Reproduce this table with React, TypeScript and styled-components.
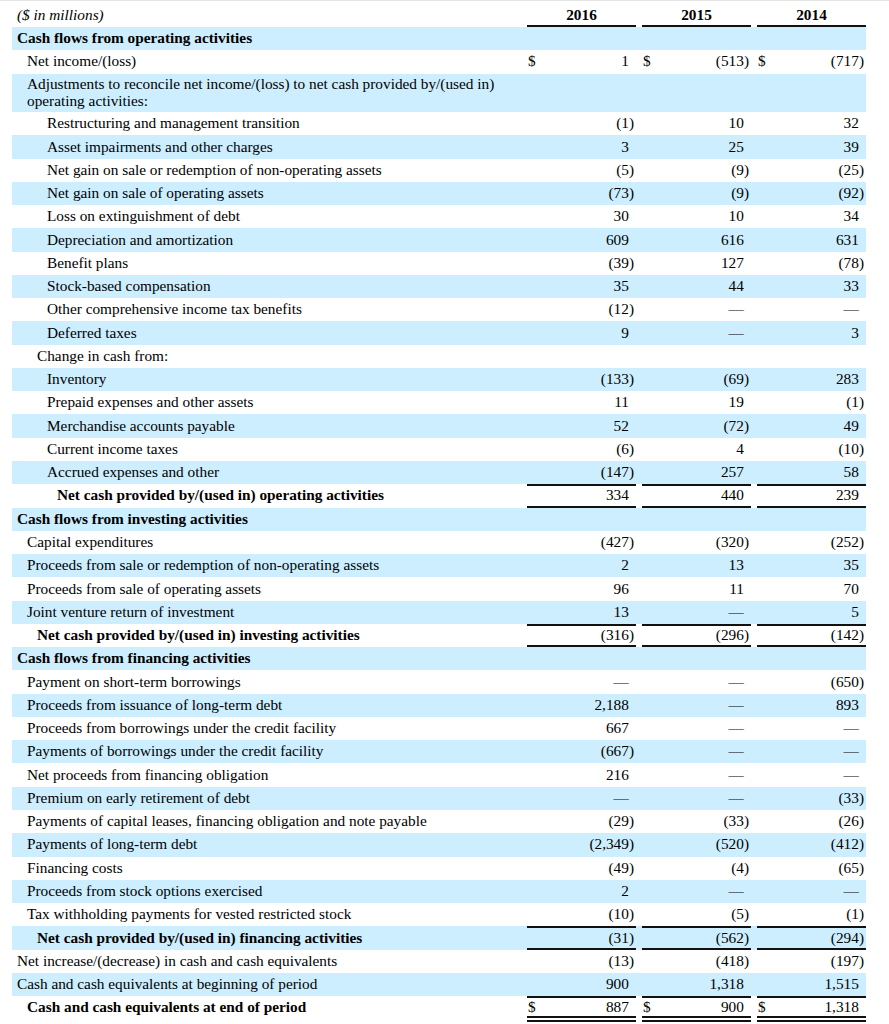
import React from 'react';
import styled, { createGlobalStyle } from 'styled-components';

const GlobalStyle = createGlobalStyle`
  html, body {
    margin: 0;
    padding: 0;
    background: #fff;
  }
  body {
    font-family: 'Liberation Serif', 'Times New Roman', serif;
    font-size: 15.3px;
    color: #000;
  }
  * {
    box-sizing: border-box;
  }
`;

const Page = styled.div`
  border-top: 1px solid #e4e4e4;
  padding-left: 12px;
`;

const Table = styled.div`
  width: 854px;
  line-height: 16.8px;
`;

const Row = styled.div<{ $shade: boolean; $h: number }>`
  display: grid;
  grid-template-columns: 509px 109px 109px 109px;
  column-gap: 6px;
  height: ${(p) => p.$h}px;
  background: ${(p) => (p.$shade ? '#cceeff' : '#fff')};
`;

const HeaderRow = styled.div`
  display: grid;
  grid-template-columns: 509px 109px 109px 109px;
  column-gap: 6px;
  height: 26px;
`;

const Units = styled.div`
  font-style: italic;
  padding: 6px 0 0 5px;
`;

const Year = styled.div`
  font-weight: bold;
  text-align: center;
  padding-top: 6px;
  border-bottom: 2px solid #111;
`;

const Label = styled.div<{ $indent: number; $bold?: boolean; $pad?: number }>`
  display: flex;
  align-items: center;
  padding-left: ${(p) => 5 + p.$indent * 10}px;
  padding-bottom: ${(p) => p.$pad || 0}px;
  font-weight: ${(p) => (p.$bold ? 'bold' : 'normal')};
  white-space: nowrap;
`;

const Cell = styled.div<{ $top?: boolean; $bottom?: 'single' | 'double' }>`
  display: flex;
  justify-content: space-between;
  align-items: center;
  padding: 0 2px 0 1px;
  border-top: ${(p) => (p.$top ? '2px solid #111' : 'none')};
  border-bottom: ${(p) =>
    p.$bottom === 'double' ? '6px double #111' : p.$bottom === 'single' ? '2px solid #111' : 'none'};
`;

const Amount = styled.span`
  margin-left: auto;
`;

const Hang = styled.span`
  visibility: hidden;
`;

type Line = {
  label: string;
  indent: number;
  bold?: boolean;
  values?: string[];
  dollar?: boolean;
  top?: boolean;
  bottom?: 'single' | 'double';
  h?: number;
  wrap?: boolean;
};

const R = 23.28;

const lines: Line[] = [
  { label: 'Cash flows from operating activities', indent: 0, bold: true, h: 23 },
  { label: 'Net income/(loss)', indent: 1, dollar: true, values: ['1', '(513)', '(717)'], h: 23.5 },
  { label: 'Adjustments to reconcile net income/(loss) to net cash provided by/(used in)\noperating activities:', indent: 1, h: 38.5, wrap: true },
  { label: 'Restructuring and management transition', indent: 3, values: ['(1)', '10', '32'] },
  { label: 'Asset impairments and other charges', indent: 3, values: ['3', '25', '39'] },
  { label: 'Net gain on sale or redemption of non-operating assets', indent: 3, values: ['(5)', '(9)', '(25)'] },
  { label: 'Net gain on sale of operating assets', indent: 3, values: ['(73)', '(9)', '(92)'] },
  { label: 'Loss on extinguishment of debt', indent: 3, values: ['30', '10', '34'] },
  { label: 'Depreciation and amortization', indent: 3, values: ['609', '616', '631'] },
  { label: 'Benefit plans', indent: 3, values: ['(39)', '127', '(78)'] },
  { label: 'Stock-based compensation', indent: 3, values: ['35', '44', '33'] },
  { label: 'Other comprehensive income tax benefits', indent: 3, values: ['(12)', '—', '—'] },
  { label: 'Deferred taxes', indent: 3, values: ['9', '—', '3'] },
  { label: 'Change in cash from:', indent: 2 },
  { label: 'Inventory', indent: 3, values: ['(133)', '(69)', '283'] },
  { label: 'Prepaid expenses and other assets', indent: 3, values: ['11', '19', '(1)'] },
  { label: 'Merchandise accounts payable', indent: 3, values: ['52', '(72)', '49'] },
  { label: 'Current income taxes', indent: 3, values: ['(6)', '4', '(10)'] },
  { label: 'Accrued expenses and other', indent: 3, values: ['(147)', '257', '58'] },
  { label: 'Net cash provided by/(used in) operating activities', indent: 4, bold: true, values: ['334', '440', '239'], top: true, bottom: 'single' },
  { label: 'Cash flows from investing activities', indent: 0, bold: true },
  { label: 'Capital expenditures', indent: 1, values: ['(427)', '(320)', '(252)'] },
  { label: 'Proceeds from sale or redemption of non-operating assets', indent: 1, values: ['2', '13', '35'] },
  { label: 'Proceeds from sale of operating assets', indent: 1, values: ['96', '11', '70'] },
  { label: 'Joint venture return of investment', indent: 1, values: ['13', '—', '5'] },
  { label: 'Net cash provided by/(used in) investing activities', indent: 2, bold: true, values: ['(316)', '(296)', '(142)'], top: true, bottom: 'single' },
  { label: 'Cash flows from financing activities', indent: 0, bold: true },
  { label: 'Payment on short-term borrowings', indent: 1, values: ['—', '—', '(650)'] },
  { label: 'Proceeds from issuance of long-term debt', indent: 1, values: ['2,188', '—', '893'] },
  { label: 'Proceeds from borrowings under the credit facility', indent: 1, values: ['667', '—', '—'] },
  { label: 'Payments of borrowings under the credit facility', indent: 1, values: ['(667)', '—', '—'] },
  { label: 'Net proceeds from financing obligation', indent: 1, values: ['216', '—', '—'] },
  { label: 'Premium on early retirement of debt', indent: 1, values: ['—', '—', '(33)'] },
  { label: 'Payments of capital leases, financing obligation and note payable', indent: 1, values: ['(29)', '(33)', '(26)'] },
  { label: 'Payments of long-term debt', indent: 1, values: ['(2,349)', '(520)', '(412)'] },
  { label: 'Financing costs', indent: 1, values: ['(49)', '(4)', '(65)'] },
  { label: 'Proceeds from stock options exercised', indent: 1, values: ['2', '—', '—'] },
  { label: 'Tax withholding payments for vested restricted stock', indent: 1, values: ['(10)', '(5)', '(1)'] },
  { label: 'Net cash provided by/(used in) financing activities', indent: 2, bold: true, values: ['(31)', '(562)', '(294)'], top: true, bottom: 'single' },
  { label: 'Net increase/(decrease) in cash and cash equivalents', indent: 0, values: ['(13)', '(418)', '(197)'] },
  { label: 'Cash and cash equivalents at beginning of period', indent: 0, values: ['900', '1,318', '1,515'] },
  { label: 'Cash and cash equivalents at end of period', indent: 1, bold: true, dollar: true, values: ['887', '900', '1,318'], top: true, bottom: 'double', h: R + 3 },
];

function Value({ v }: { v: string }) {
  const neg = v.startsWith('(');
  return (
    <Amount>
      {v}
      {!neg && <Hang>)</Hang>}
    </Amount>
  );
}

export default function App() {
  return (
    <Page>
      <GlobalStyle />
      <Table>
        <HeaderRow>
          <Units>($ in millions)</Units>
          <Year>2016</Year>
          <Year>2015</Year>
          <Year>2014</Year>
        </HeaderRow>
        {lines.map((l, i) => (
          <Row key={l.label} $shade={i % 2 === 0} $h={l.h || R}>
            <Label $indent={l.indent} $bold={l.bold} $pad={l.bottom === 'double' ? 4 : 0}>
              {l.wrap ? (
                <span>
                  {l.label.split('\n').map((part, j) => (
                    <React.Fragment key={j}>
                      {j > 0 && <br />}
                      {part}
                    </React.Fragment>
                  ))}
                </span>
              ) : (
                l.label
              )}
            </Label>
            {[0, 1, 2].map((c) => (
              <Cell key={c} $top={l.top} $bottom={l.bottom}>
                {l.dollar && <span>$</span>}
                {l.values && <Value v={l.values[c]} />}
              </Cell>
            ))}
          </Row>
        ))}
      </Table>
    </Page>
  );
}
